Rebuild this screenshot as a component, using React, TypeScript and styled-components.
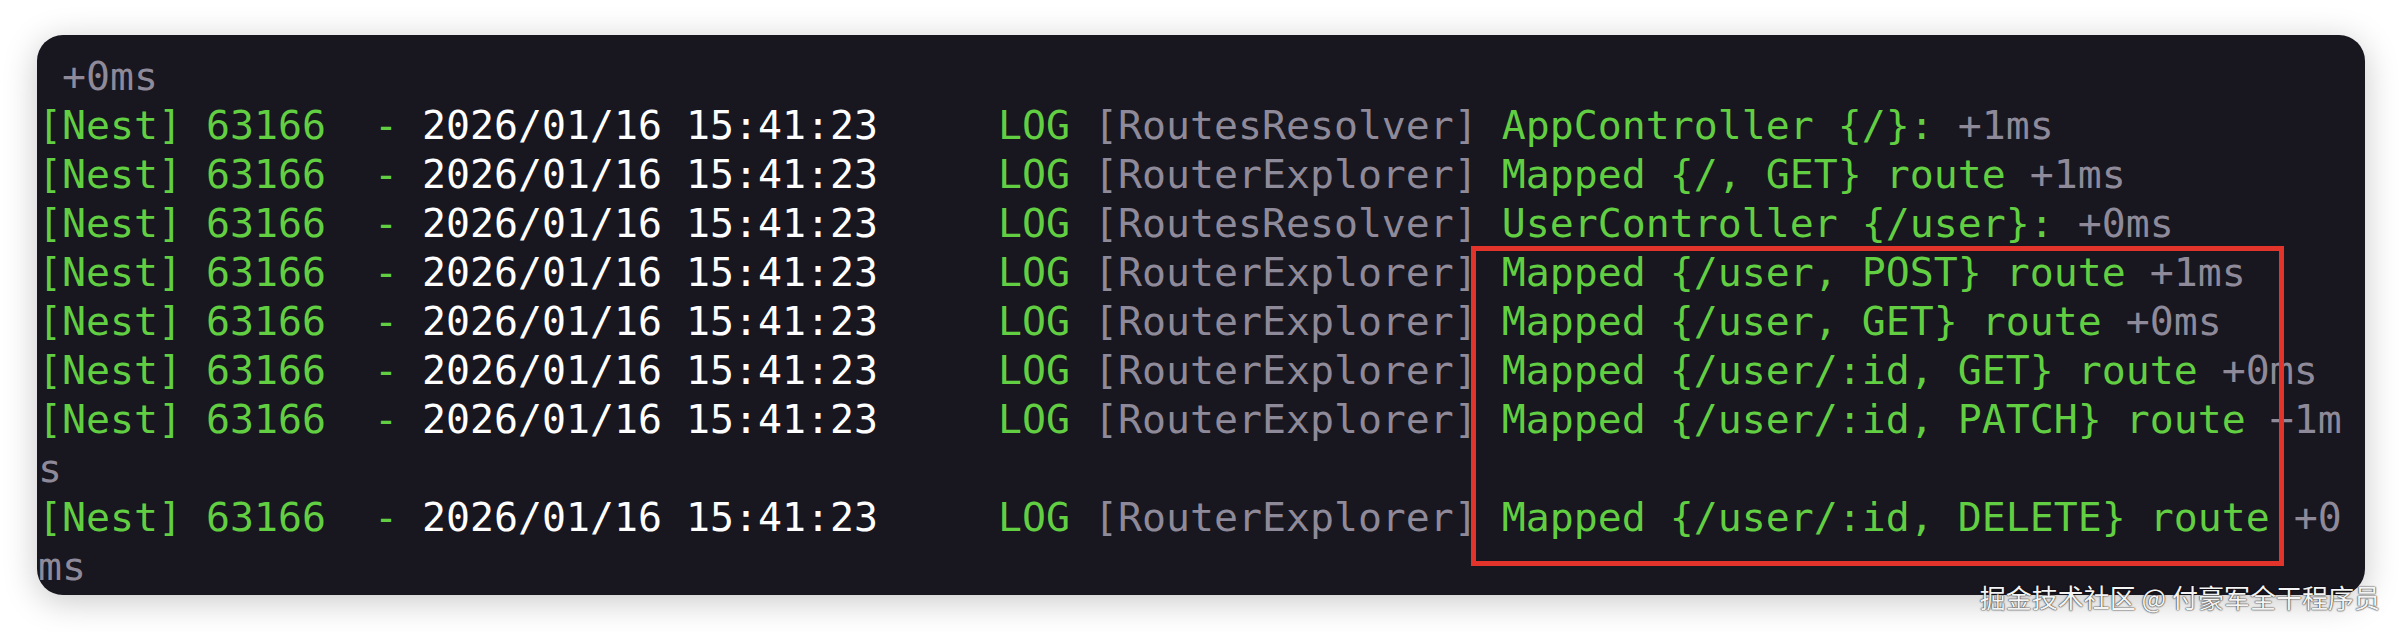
import React from "react";
import styled, { createGlobalStyle } from "styled-components";

const GlobalStyle = createGlobalStyle`
  html, body {
    margin: 0;
    padding: 0;
    background: #ffffff;
  }
  #root {
    width: 2400px;
    height: 632px;
  }
`;

type Tone = "green" | "white" | "gray";

const toneColor: Record<Tone, string> = {
  green: "#62cf43",
  white: "#ffffff",
  gray: "#8e8a99",
};

const Page = styled.div`
  position: relative;
  box-sizing: border-box;
  width: 2400px;
  height: 632px;
  padding: 35px 35px 0 37px;
  background: #ffffff;
`;

const Card = styled.div`
  position: relative;
  box-sizing: border-box;
  width: 2328px;
  height: 560px;
  background: #18161f;
  border-radius: 26px;
  box-shadow: 0 6px 34px rgba(0, 0, 0, 0.22);
  overflow: hidden;
`;

const Terminal = styled.pre`
  margin: 0;
  padding: 17px 0 0 1px;
  font-family: "DejaVu Sans Mono", "Liberation Mono", monospace;
  font-size: 39.86px;
  line-height: 49px;
  white-space: pre;
`;

const Line = styled.div`
  height: 49px;
`;

const Seg = styled.span<{ $tone: Tone }>`
  color: ${(p) => toneColor[p.$tone]};
`;

const Highlight = styled.div`
  position: absolute;
  left: 1434px;
  top: 211px;
  width: 813px;
  height: 320px;
  box-sizing: border-box;
  border: 5px solid #e3342b;
  pointer-events: none;
`;

const Watermark = styled.div`
  position: absolute;
  right: 20px;
  top: 581px;
  font-family: "Noto Sans CJK SC", "Noto Sans", sans-serif;
  font-size: 26px;
  line-height: 32px;
  color: #f4f4f4;
  text-shadow: 0 0 2px rgba(0, 0, 0, 0.75), 0 0 1px rgba(0, 0, 0, 0.9);
  white-space: pre;
`;

type Segment = [Tone, string];

const prefix = (source: string): Segment[] => [
  ["green", "[Nest] 63166  - "],
  ["white", "2026/01/16 15:41:23"],
  ["green", "     LOG "],
  ["gray", `[${source}]`],
];

const lines: Segment[][] = [
  [["gray", " +0ms"]],
  [...prefix("RoutesResolver"), ["green", " AppController {/}:"], ["gray", " +1ms"]],
  [...prefix("RouterExplorer"), ["green", " Mapped {/, GET} route"], ["gray", " +1ms"]],
  [...prefix("RoutesResolver"), ["green", " UserController {/user}:"], ["gray", " +0ms"]],
  [...prefix("RouterExplorer"), ["green", " Mapped {/user, POST} route"], ["gray", " +1ms"]],
  [...prefix("RouterExplorer"), ["green", " Mapped {/user, GET} route"], ["gray", " +0ms"]],
  [...prefix("RouterExplorer"), ["green", " Mapped {/user/:id, GET} route"], ["gray", " +0ms"]],
  [...prefix("RouterExplorer"), ["green", " Mapped {/user/:id, PATCH} route"], ["gray", " +1m"]],
  [["gray", "s"]],
  [...prefix("RouterExplorer"), ["green", " Mapped {/user/:id, DELETE} route"], ["gray", " +0"]],
  [["gray", "ms"]],
];

export default function App() {
  return (
    <>
      <GlobalStyle />
      <Page>
        <Card>
          <Terminal>
            {lines.map((segs, i) => (
              <Line key={i}>
                {segs.map(([tone, text], j) => (
                  <Seg key={j} $tone={tone}>
                    {text}
                  </Seg>
                ))}
              </Line>
            ))}
          </Terminal>
          <Highlight />
        </Card>
        <Watermark>掘金技术社区 @ 付豪军全干程序员</Watermark>
      </Page>
    </>
  );
}
